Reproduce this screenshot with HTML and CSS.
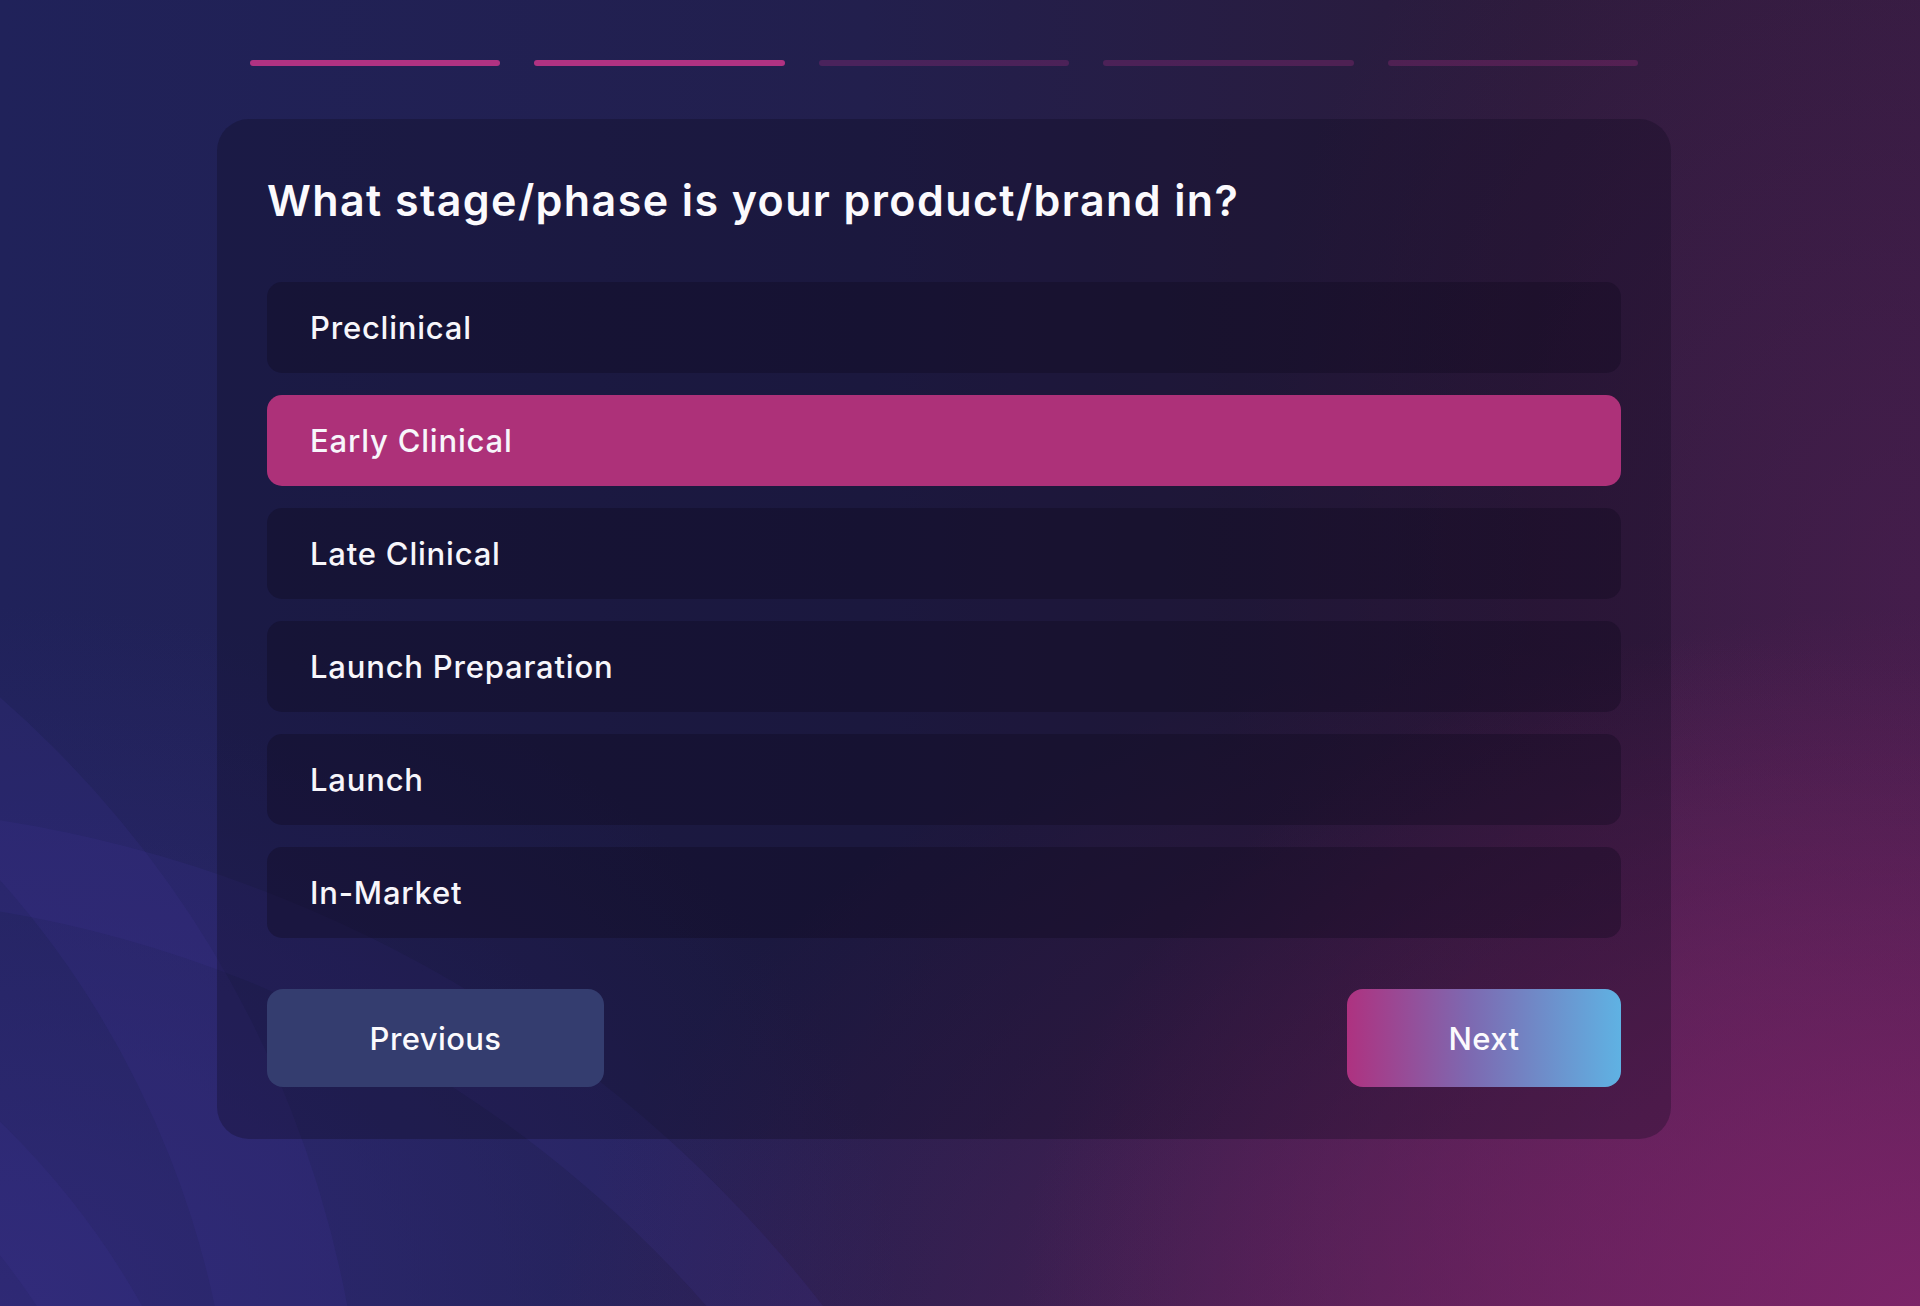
FILE: index.html
```html
<!DOCTYPE html>
<html lang="en">
<head>
    <meta charset="UTF-8">
    <meta name="viewport" content="width=device-width, initial-scale=1.0">
    <title>Product Stage</title>
    <link rel="stylesheet" href="styles.css">
</head>
<body>
    <svg class="bg-arcs" viewBox="0 0 1920 1306" preserveAspectRatio="none" aria-hidden="true">
        <circle class="arc-wide" cx="-700" cy="1500" r="1000" />
        <circle cx="-560" cy="1700" r="760" />
        <circle cx="-200" cy="2100" r="1250" />
    </svg>

    <div class="page">
        <div class="progress">
            <span class="step done"></span>
            <span class="step done"></span>
            <span class="step"></span>
            <span class="step"></span>
            <span class="step"></span>
        </div>

        <div class="card">
            <h1>What stage/phase is your product/brand in?</h1>

            <div class="options">
                <button class="option">Preclinical</button>
                <button class="option selected">Early Clinical</button>
                <button class="option">Late Clinical</button>
                <button class="option">Launch Preparation</button>
                <button class="option">Launch</button>
                <button class="option">In-Market</button>
            </div>

            <div class="nav">
                <button class="btn btn-prev">Previous</button>
                <button class="btn btn-next">Next</button>
            </div>
        </div>
    </div>
</body>
</html>
```

FILE: styles.css
```css
html, body {
    height: 100%;
}
body {
    margin: 0;
    padding: 0 32px 0 0;
    box-sizing: border-box;
    font-family: "Inter", "Noto Sans", sans-serif;
    color: #f7f6fb;
    overflow: hidden;
    position: relative;
    background:
        radial-gradient(ellipse 900px 700px at 100% 100%, rgba(125, 36, 105, 0.95), rgba(125, 36, 105, 0) 100%),
        radial-gradient(ellipse 1100px 800px at 85% 110%, rgba(110, 34, 100, 0.7), rgba(110, 34, 100, 0) 100%),
        radial-gradient(ellipse 700px 900px at 100% 45%, rgba(90, 30, 90, 0.45), rgba(90, 30, 90, 0) 100%),
        radial-gradient(ellipse 900px 700px at 0% 100%, rgba(48, 42, 120, 0.9), rgba(48, 42, 120, 0) 100%),
        linear-gradient(90deg, #20225a 0%, #221f4d 45%, #2b1b3b 80%, #321c3f 100%);
}
.bg-arcs {
    position: absolute;
    left: 0;
    top: 0;
    width: 100%;
    height: 100%;
    pointer-events: none;
}
.bg-arcs circle {
    fill: none;
    stroke: rgba(70, 58, 165, 0.14);
    stroke-width: 90;
}
.bg-arcs .arc-wide {
    stroke-width: 130;
}
.page {
    position: relative;
    width: 1454px;
    margin: 0 0 0 217px;
}

/* progress steps */
.progress {
    display: flex;
    gap: 34px;
    padding: 60px 33px 0;
}
.step {
    flex: 1;
    height: 6px;
    border-radius: 3px;
    background: rgba(150, 44, 120, 0.35);
}
.step.done {
    background: #b03282;
}

.card {
    margin-top: 53px;
    padding: 55px 50px 52px 50px;
    border-radius: 32px;
    background: rgba(12, 10, 30, 0.3);
}
h1 {
    margin: 0 0 56px;
    font-size: 43px;
    line-height: 52px;
    font-weight: 600;
    letter-spacing: 1.4px;
    color: #fbfafd;
}
.options {
    display: flex;
    flex-direction: column;
    gap: 22px;
}
.option {
    height: 91px;
    padding: 0 0 0 43px;
    border: none;
    border-radius: 15px;
    background: rgba(14, 10, 30, 0.34);
    color: #f7f6fb;
    font-family: inherit;
    font-size: 31px;
    font-weight: 500;
    letter-spacing: 0.8px;
    text-align: left;
    cursor: pointer;
}
.option.selected {
    background: #ad3179;
}

.nav {
    display: flex;
    justify-content: space-between;
    margin-top: 51px;
}
.btn {
    height: 98px;
    border: none;
    border-radius: 16px;
    color: #fbfafd;
    font-family: inherit;
    font-size: 31px;
    font-weight: 500;
    letter-spacing: 0.4px;
    cursor: pointer;
}
.btn-prev {
    width: 337px;
    background: #343d6f;
}
.btn-next {
    width: 274px;
    background: linear-gradient(90deg, #ae3280 0%, #7d69b1 45%, #5fb2e3 100%);
}
```
